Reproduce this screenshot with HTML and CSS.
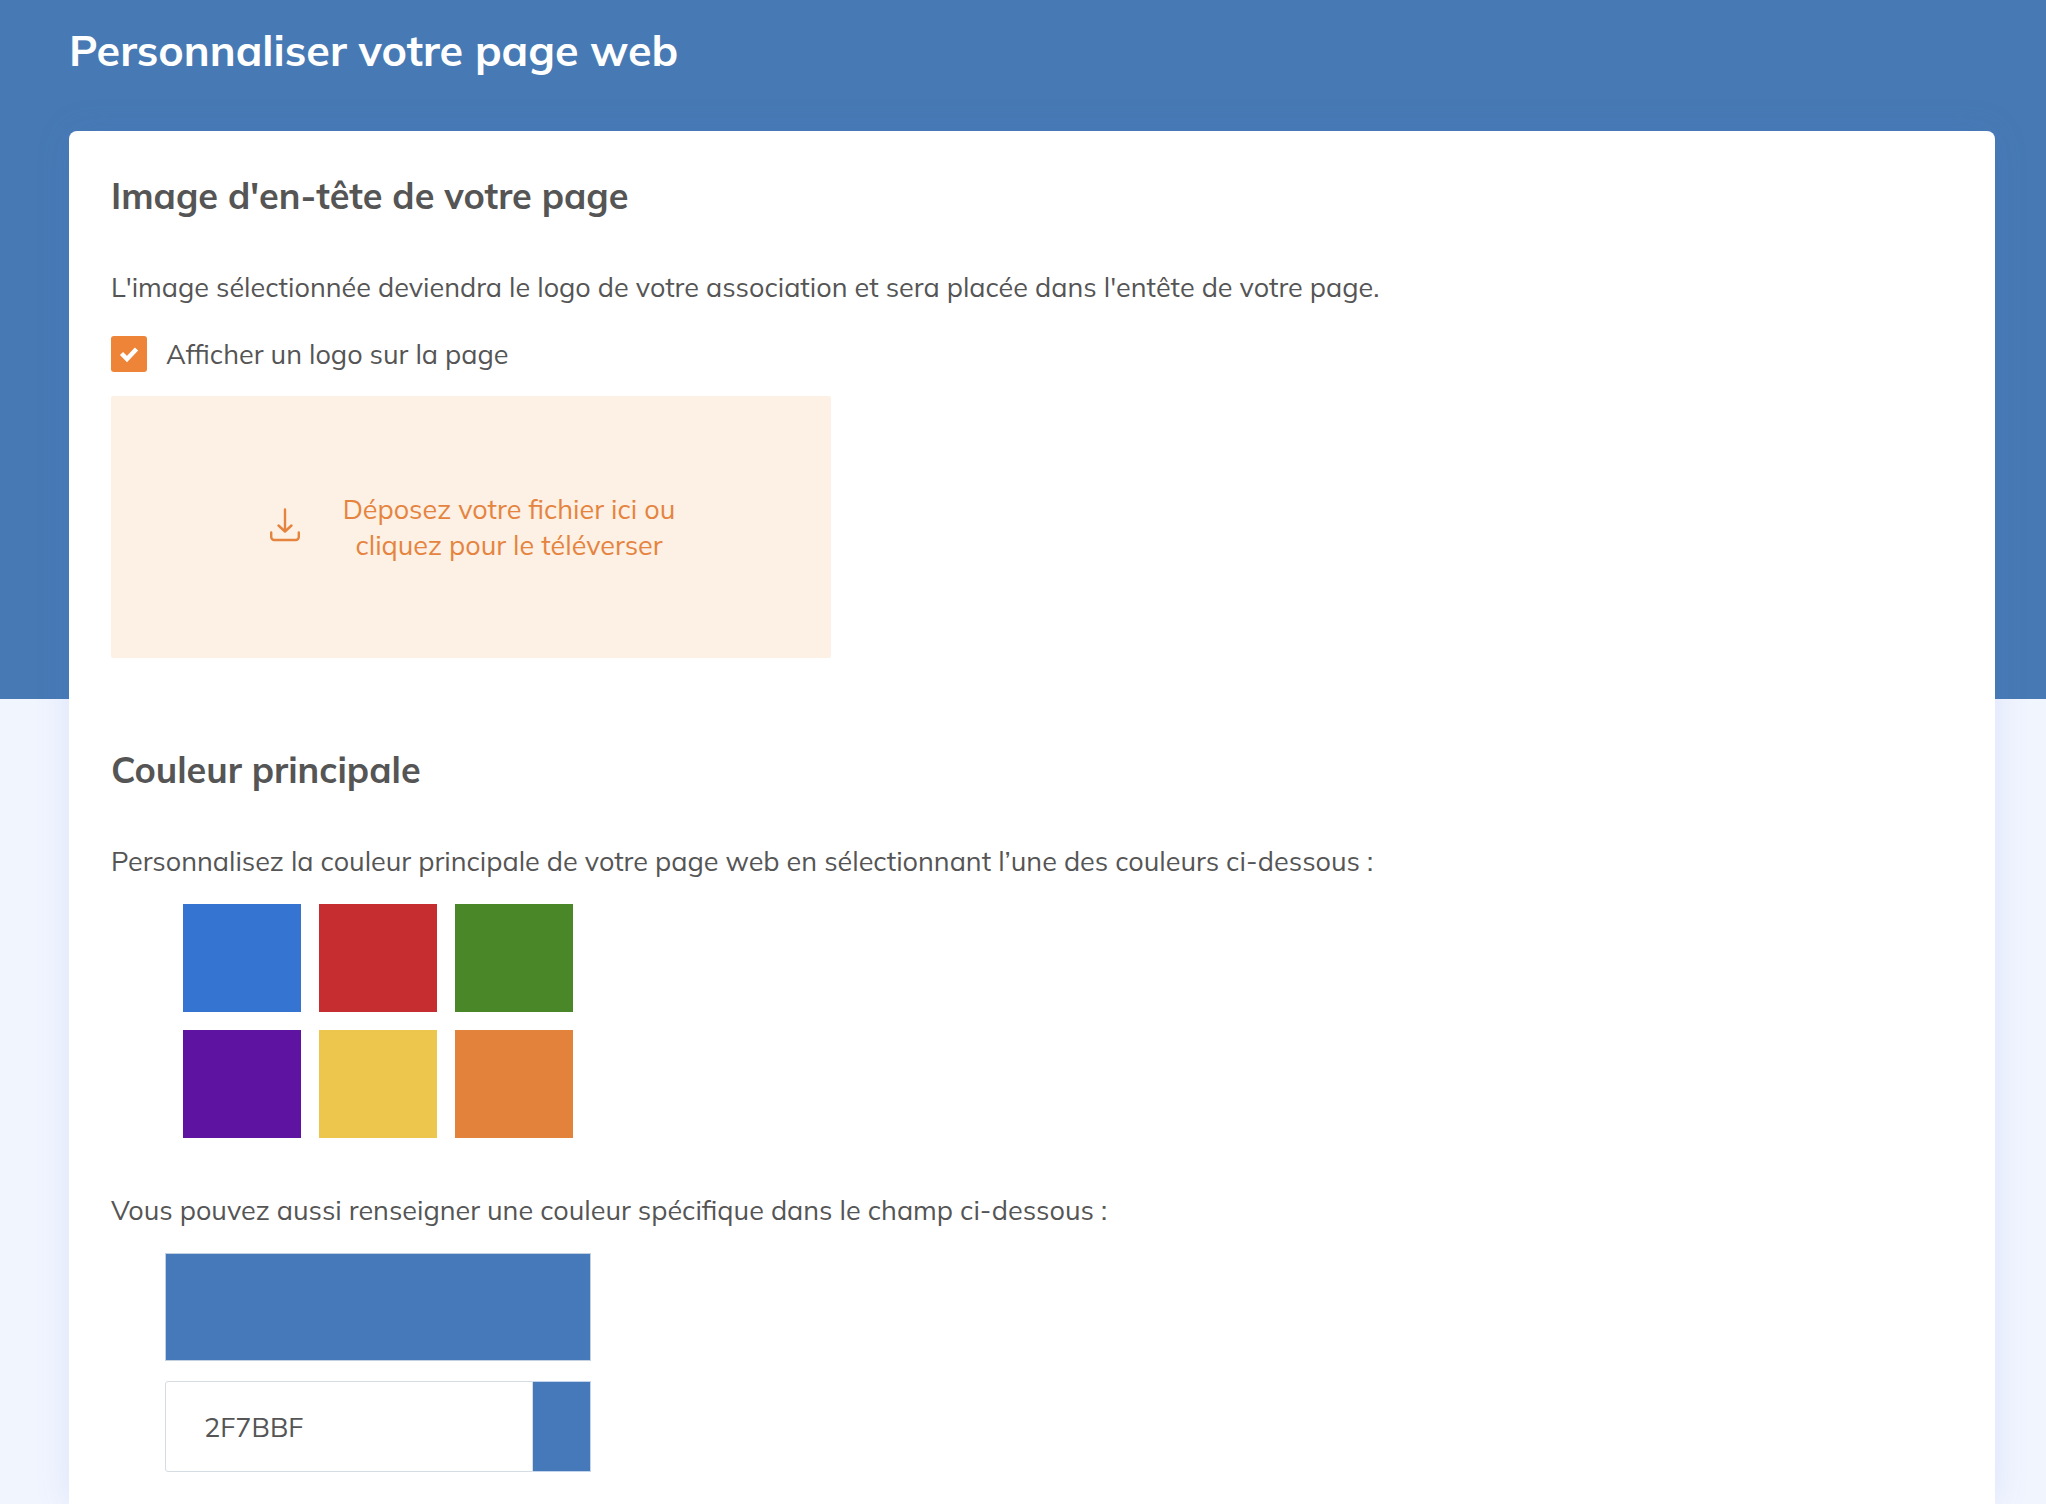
FILE: index.html
```html
<!DOCTYPE html>
<html lang="fr">
<head>
  <meta charset="UTF-8" />
  <title>Personnaliser votre page web</title>
  <link rel="stylesheet" href="styles.css">
</head>
<body>
  <div class="page">
    <h1>Personnaliser votre page web</h1>
    <form class="card">
      <section class="section">
        <h2>Image d'en-tête de votre page</h2>
        <p>L'image sélectionnée deviendra le logo de votre association et sera placée dans l'entête de votre page.</p>
        <label class="check" for="showLogo">
          <input type="checkbox" id="showLogo" checked />
          <span>Afficher un logo sur la page</span>
        </label>
        <button type="button" class="dropzone">
          <svg class="upload-icon" width="32" height="38" viewBox="0 0 32 38" fill="none" stroke="currentColor" stroke-width="2.4" stroke-linecap="round" stroke-linejoin="round">
            <path d="M16 1.500v21.500M9.500 17.500l6.500 6 6.500-6" />
            <path d="M2.200 24.500v4.500a3 3 0 0 0 3 3h21.600a3 3 0 0 0 3-3v-4.500" />
          </svg>
          <span>Déposez votre fichier ici ou<br>cliquez pour le téléverser</span>
        </button>
      </section>

      <section class="section">
        <h2>Couleur principale</h2>
        <p>Personnalisez la couleur principale de votre page web en sélectionnant l’une des couleurs ci-dessous :</p>
        <div class="swatches">
          <button type="button" class="swatch blue" aria-label="Bleu"></button>
          <button type="button" class="swatch red" aria-label="Rouge"></button>
          <button type="button" class="swatch green" aria-label="Vert"></button>
          <button type="button" class="swatch purple" aria-label="Violet"></button>
          <button type="button" class="swatch yellow" aria-label="Jaune"></button>
          <button type="button" class="swatch orange" aria-label="Orange"></button>
        </div>
        <label class="hint" for="color">Vous pouvez aussi renseigner une couleur spécifique dans le champ ci-dessous :</label>
        <div class="custom">
          <div class="preview"></div>
          <div class="field">
            <input type="text" id="color" value="2F7BBF" />
            <button type="button" class="picker" aria-label="Choisir une couleur"></button>
          </div>
        </div>
      </section>
    </form>
  </div>
</body>
</html>
```

FILE: styles.css
```css
* {
  box-sizing: border-box;
}
body {
  margin: 0;
  background: #f1f5fe;
  font-family: Muli, Mulish, Lato, sans-serif;
  font-size: 27px;
  line-height: 36px;
  color: #555;
}
.page {
  display: flex;
  flex-direction: column;
  min-height: 100vh;
  padding: 23px 51px 0 69px;
  background: linear-gradient(#477ab4, #477ab4) no-repeat top / 100% 699px;
}
h1, h2, p {
  margin: 0;
}
h1 {
  margin-bottom: 54px;
  font-size: 43px;
  line-height: 54px;
  font-weight: bold;
  color: white;
}
h2 {
  margin-bottom: 51px;
  font-size: 36px;
  line-height: 44px;
  font-weight: bold;
}
.card {
  flex: 1;
  padding: 43px 42px 32px;
  background: white;
  border-radius: 8px 8px 0 0;
  box-shadow: 0 0 36px rgba(70, 110, 220, 0.12);
}
.section + .section {
  margin-top: 90px;
}
.check {
  display: flex;
  align-items: center;
  gap: 19px;
  margin: 31px 0 24px;
}
.check input {
  appearance: none;
  width: 36px;
  height: 36px;
  margin: 0;
  border-radius: 3px;
  background: #ed8438 url("data:image/svg+xml,%3Csvg xmlns='http://www.w3.org/2000/svg' viewBox='0 0 36 36'%3E%3Cpath d='M10.500 17.500l5.500 5.500 9.500-10' fill='none' stroke='white' stroke-width='4.500'/%3E%3C/svg%3E") center / 36px;
}
button, input {
  font: inherit;
  color: inherit;
}
button {
  padding: 0;
  border: none;
  cursor: pointer;
}
.dropzone {
  display: flex;
  align-items: center;
  justify-content: center;
  gap: 42px;
  width: 720px;
  max-width: 100%;
  height: 262px;
  padding-left: 2px;
  background: #fdf0e4;
  border-radius: 2px;
  color: #e5843f;
}
.swatches {
  display: grid;
  grid-template-columns: repeat(3, 118px);
  grid-auto-rows: 108px;
  gap: 18px;
  margin: 25px 0 54px 72px;
}
.blue { background: #3575d1; }
.red { background: #c62d30; }
.green { background: #4a8728; }
.purple { background: #5f14a1; }
.yellow { background: #ecc64d; }
.orange { background: #e3823b; }
.hint {
  display: block;
}
.custom {
  width: 426px;
  margin: 25px 0 0 54px;
}
.preview {
  height: 108px;
  margin-bottom: 20px;
  background: #4579b9;
  border: 1px solid #c3d0e0;
}
.field {
  display: flex;
  height: 91px;
}
.field input {
  flex: 1;
  min-width: 0;
  padding: 0 38px;
  background: white;
  border: 1px solid #d5dde3;
  border-radius: 3px 0 0 3px;
}
.picker {
  width: 58px;
  background: #4579b9;
  border: 1px solid #c3d5ec;
  border-left: none;
}
```
